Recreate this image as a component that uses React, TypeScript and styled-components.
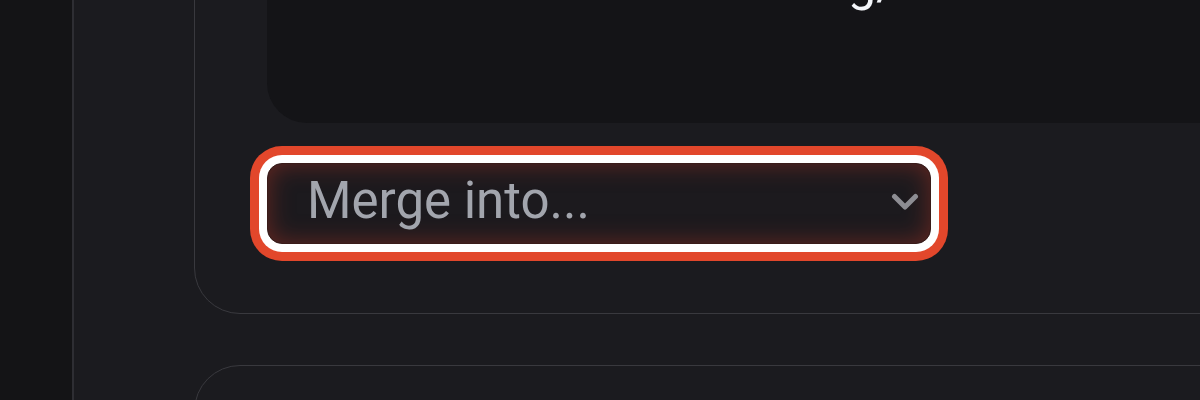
import React from "react";
import styled, { createGlobalStyle } from "styled-components";

const Global = createGlobalStyle`
  html, body {
    margin: 0;
    padding: 0;
    background: #141416;
    height: 400px;
    overflow: hidden;
  }
  #root { height: 400px; }
`;

const Shell = styled.div`
  display: flex;
  height: 400px;
  overflow: hidden;
  font-family: Roboto, "Noto Sans", sans-serif;
`;

const Rail = styled.aside`
  width: 72px;
  flex: 0 0 72px;
  background: #141416;
`;

const Main = styled.main`
  flex: 1;
  min-width: 0;
  background: #1b1b1f;
  border-left: 2px solid #2e2e33;
  padding-left: 120px;
  overflow: hidden;
  display: flex;
  flex-direction: column;
  gap: 51px;
`;

const Card = styled.section<{ $offset?: number }>`
  margin-top: ${(p) => p.$offset ?? 0}px;
  width: 1100px;
  flex: 0 0 auto;
  box-sizing: border-box;
  border: 1.5px solid #39393e;
  border-radius: 46px;
  padding: 72px 0 69px 72px;
  display: flex;
  flex-direction: column;
  gap: 40px;
`;

const EmptyCard = styled(Card)`
  height: 200px;
`;

const Preview = styled.div`
  height: 200px;
  background: #141417;
  border-radius: 40px;
  padding: 30px 0 0 60px;
  box-sizing: border-box;
  color: #f4f6fa;
  font-size: 50px;
  line-height: 60px;
  white-space: nowrap;
  overflow: hidden;
`;

const Select = styled.div`
  width: 664px;
  height: 81px;
  box-sizing: border-box;
  display: flex;
  align-items: center;
  justify-content: space-between;
  padding: 0 11px 0 39px;
  border-radius: 15px;
  background: #1c1a1e;
  border: 1px solid #3a1c1a;
  box-shadow: inset 0 0 24px rgba(175, 52, 36, 0.5), 0 0 0 8px #ffffff,
    0 0 0 17px #e2472b;
  cursor: pointer;
`;

const Placeholder = styled.span`
  font-size: 51px;
  color: #a2a5ad;
  line-height: 1;
  white-space: nowrap;
  margin-top: -6px;
`;

const Chevron = styled.svg`
  width: 28px;
  height: 18px;
  margin-top: -4px;
  flex: 0 0 auto;
`;

export default function App() {
  return (
    <>
      <Global />
      <Shell>
        <Rail />
        <Main>
          <Card $offset={-150}>
            <Preview>Old notes on the existing/</Preview>
            <Select role="combobox" aria-label="Merge into">
              <Placeholder>Merge into...</Placeholder>
              <Chevron viewBox="0 0 28 18" aria-hidden="true">
                <polyline
                  points="3.5,3.5 14,14 24.5,3.5"
                  fill="none"
                  stroke="#8d8d93"
                  strokeWidth="5"
                  strokeLinecap="round"
                  strokeLinejoin="round"
                />
              </Chevron>
            </Select>
          </Card>
          <EmptyCard />
        </Main>
      </Shell>
    </>
  );
}
